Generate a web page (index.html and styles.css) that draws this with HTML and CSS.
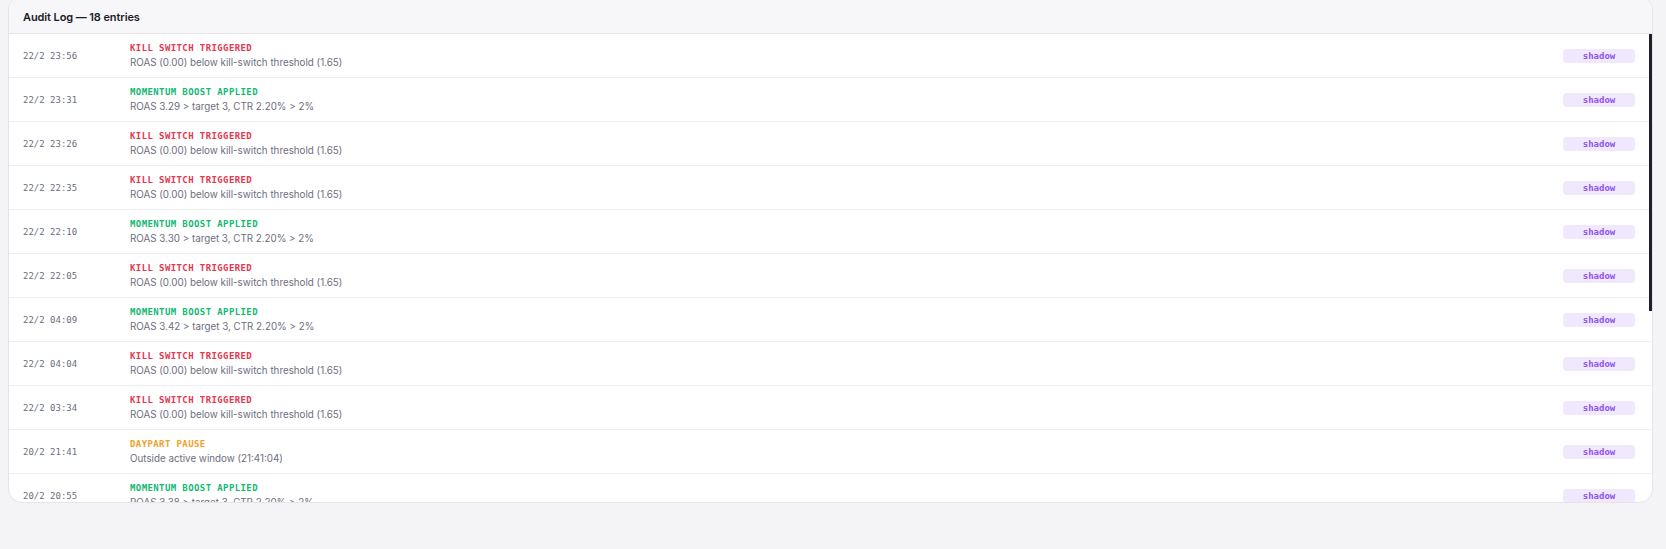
FILE: index.html
```html
<!DOCTYPE html>
<html lang="en">
<head>
<meta charset="utf-8">
<title>Audit Log</title>
<link rel="stylesheet" href="styles.css">
</head>
<body>
<section class="card">
  <header class="card-head">Audit Log — 18 entries</header>
  <div class="log">
    <div class="row"><span class="time">22/2 23:56</span><div class="body"><div class="title kill">KILL SWITCH TRIGGERED</div><div class="desc">ROAS (0.00) below kill-switch threshold (1.65)</div></div><span class="badge">shadow</span></div>
    <div class="row"><span class="time">22/2 23:31</span><div class="body"><div class="title boost">MOMENTUM BOOST APPLIED</div><div class="desc">ROAS 3.29 &gt; target 3, CTR 2.20% &gt; 2%</div></div><span class="badge">shadow</span></div>
    <div class="row"><span class="time">22/2 23:26</span><div class="body"><div class="title kill">KILL SWITCH TRIGGERED</div><div class="desc">ROAS (0.00) below kill-switch threshold (1.65)</div></div><span class="badge">shadow</span></div>
    <div class="row"><span class="time">22/2 22:35</span><div class="body"><div class="title kill">KILL SWITCH TRIGGERED</div><div class="desc">ROAS (0.00) below kill-switch threshold (1.65)</div></div><span class="badge">shadow</span></div>
    <div class="row"><span class="time">22/2 22:10</span><div class="body"><div class="title boost">MOMENTUM BOOST APPLIED</div><div class="desc">ROAS 3.30 &gt; target 3, CTR 2.20% &gt; 2%</div></div><span class="badge">shadow</span></div>
    <div class="row"><span class="time">22/2 22:05</span><div class="body"><div class="title kill">KILL SWITCH TRIGGERED</div><div class="desc">ROAS (0.00) below kill-switch threshold (1.65)</div></div><span class="badge">shadow</span></div>
    <div class="row"><span class="time">22/2 04:09</span><div class="body"><div class="title boost">MOMENTUM BOOST APPLIED</div><div class="desc">ROAS 3.42 &gt; target 3, CTR 2.20% &gt; 2%</div></div><span class="badge">shadow</span></div>
    <div class="row"><span class="time">22/2 04:04</span><div class="body"><div class="title kill">KILL SWITCH TRIGGERED</div><div class="desc">ROAS (0.00) below kill-switch threshold (1.65)</div></div><span class="badge">shadow</span></div>
    <div class="row"><span class="time">22/2 03:34</span><div class="body"><div class="title kill">KILL SWITCH TRIGGERED</div><div class="desc">ROAS (0.00) below kill-switch threshold (1.65)</div></div><span class="badge">shadow</span></div>
    <div class="row"><span class="time">20/2 21:41</span><div class="body"><div class="title pause">DAYPART PAUSE</div><div class="desc">Outside active window (21:41:04)</div></div><span class="badge">shadow</span></div>
    <div class="row"><span class="time">20/2 20:55</span><div class="body"><div class="title boost">MOMENTUM BOOST APPLIED</div><div class="desc">ROAS 3.38 &gt; target 3, CTR 2.20% &gt; 2%</div></div><span class="badge">shadow</span></div>
    <div class="row"><span class="time">20/2 20:12</span><div class="body"><div class="title kill">KILL SWITCH TRIGGERED</div><div class="desc">ROAS (0.00) below kill-switch threshold (1.65)</div></div><span class="badge">shadow</span></div>
    <div class="row"><span class="time">20/2 19:47</span><div class="body"><div class="title boost">MOMENTUM BOOST APPLIED</div><div class="desc">ROAS 3.21 &gt; target 3, CTR 2.20% &gt; 2%</div></div><span class="badge">shadow</span></div>
    <div class="row"><span class="time">20/2 18:30</span><div class="body"><div class="title kill">KILL SWITCH TRIGGERED</div><div class="desc">ROAS (0.00) below kill-switch threshold (1.65)</div></div><span class="badge">shadow</span></div>
    <div class="row"><span class="time">20/2 07:02</span><div class="body"><div class="title pause">DAYPART PAUSE</div><div class="desc">Outside active window (07:02:11)</div></div><span class="badge">shadow</span></div>
    <div class="row"><span class="time">19/2 23:58</span><div class="body"><div class="title kill">KILL SWITCH TRIGGERED</div><div class="desc">ROAS (0.00) below kill-switch threshold (1.65)</div></div><span class="badge">shadow</span></div>
    <div class="row"><span class="time">19/2 22:14</span><div class="body"><div class="title boost">MOMENTUM BOOST APPLIED</div><div class="desc">ROAS 3.25 &gt; target 3, CTR 2.20% &gt; 2%</div></div><span class="badge">shadow</span></div>
    <div class="row"><span class="time">19/2 21:40</span><div class="body"><div class="title pause">DAYPART PAUSE</div><div class="desc">Outside active window (21:40:02)</div></div><span class="badge">shadow</span></div>
  </div>
  <div class="scroll-thumb"></div>
</section>
</body>
</html>
```
FILE: styles.css
```css
html, body {
  margin: 0;
  padding: 0;
  background: #f4f4f6;
}
body {
  padding: 0 13px 0 8px;
  font-family: "Inter", "Noto Sans", sans-serif;
}
.card {
  position: relative;
  margin-top: -4px;
  height: 507px;
  box-sizing: border-box;
  border: 1px solid #e4e4e9;
  border-radius: 14px;
  background: #ffffff;
  display: flex;
  flex-direction: column;
  overflow: hidden;
}
.card-head {
  height: 37px;
  flex: none;
  box-sizing: border-box;
  padding: 3px 14px 0;
  display: flex;
  align-items: center;
  background: #f7f7f9;
  border-bottom: 1px solid #e4e4e9;
  font-size: 11px;
  font-weight: 600;
  letter-spacing: -0.1px;
  color: #1b1b28;
}
.log {
  flex: 1;
  overflow: hidden;
  min-height: 0;
}
.scroll-thumb {
  position: absolute;
  right: 0;
  top: 37px;
  width: 3px;
  height: 277px;
  background: #1e1e2e;
}
.row {
  display: grid;
  grid-template-columns: 107px 1fr auto;
  align-items: center;
  padding: 7px 17px 7px 14px;
  border-bottom: 1px solid #efeff2;
}
.time {
  font-family: "DejaVu Sans Mono", monospace;
  font-size: 9px;
  color: #6e6e80;
}
.title {
  font-family: "DejaVu Sans Mono", monospace;
  font-size: 9px;
  font-weight: 700;
  letter-spacing: 0.4px;
  line-height: 14px;
}
.kill { color: #e8364f; }
.boost { color: #14b873; }
.pause { color: #f2a12a; }
.desc {
  font-size: 9.8px;
  line-height: 15px;
  color: #6e6e80;
}
.badge {
  width: 72px;
  height: 14px;
  border-radius: 4px;
  background: #f0e8fd;
  color: #9154f0;
  font-family: "DejaVu Sans Mono", monospace;
  font-size: 9px;
  font-weight: 700;
  line-height: 14px;
  text-align: center;
}
```
